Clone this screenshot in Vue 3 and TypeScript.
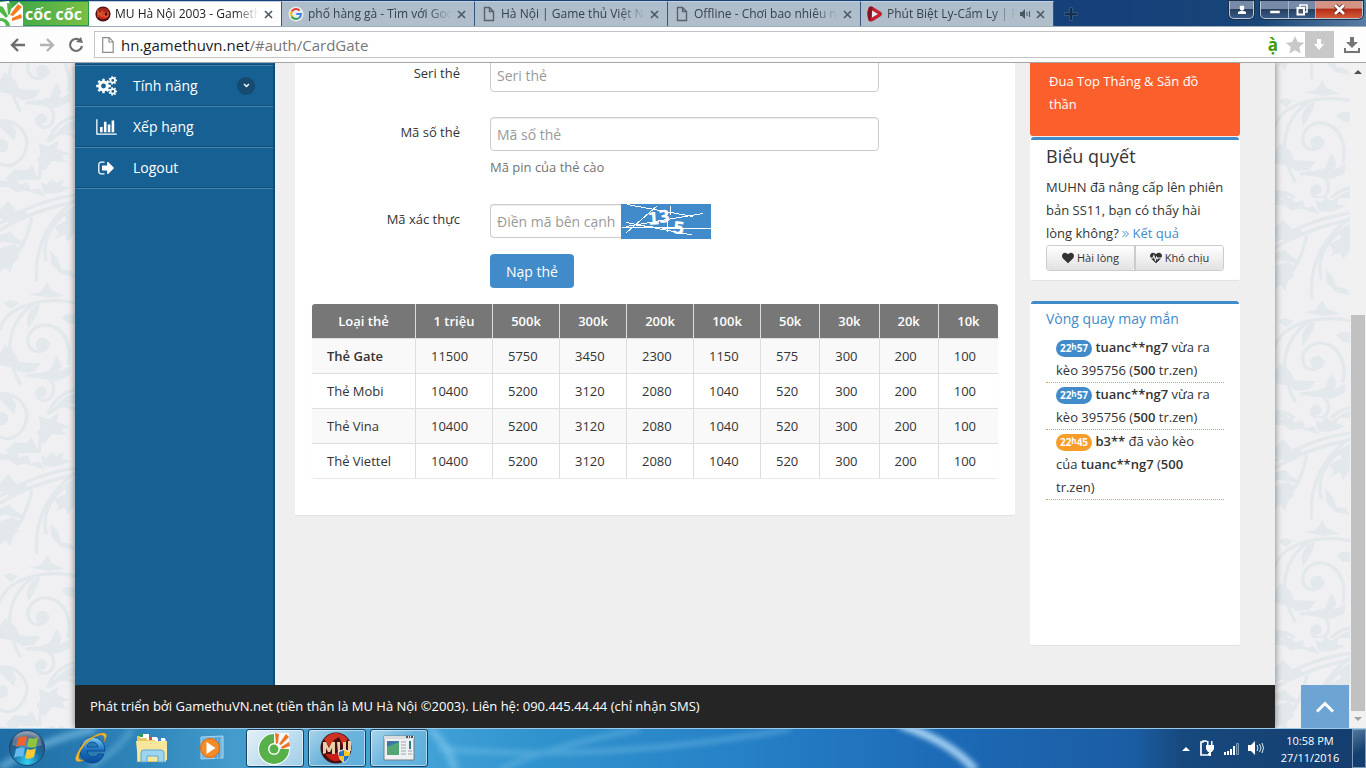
<script setup lang="ts">
interface Tab {
  title: string
  icon: 'mu' | 'google' | 'page' | 'play'
  active?: boolean
  audio?: boolean
}

const tabs: Tab[] = [
  { title: 'MU Hà Nội 2003 - Gameth', icon: 'mu', active: true },
  { title: 'phố hàng gà - Tìm với Goo', icon: 'google' },
  { title: 'Hà Nội | Game thủ Việt Na', icon: 'page' },
  { title: 'Offline - Chơi bao nhiêu nă', icon: 'page' },
  { title: 'Phút Biệt Ly-Cẩm Ly | Ph', icon: 'play', audio: true },
]

const columns = ['Loại thẻ', '1 triệu', '500k', '300k', '200k', '100k', '50k', '30k', '20k', '10k']
const rest = ['10400', '5200', '3120', '2080', '1040', '520', '300', '200', '100']
const rows = [
  { name: 'Thẻ Gate', values: ['11500', '5750', '3450', '2300', '1150', '575', '300', '200', '100'] },
  { name: 'Thẻ Mobi', values: rest },
  { name: 'Thẻ Vina', values: rest },
  { name: 'Thẻ Viettel', values: rest },
]

function gear(cx: number, cy: number, r: number, teeth: number, hole: number): string {
  const inner = r * 0.74
  const step = (Math.PI * 2) / teeth
  const pts: string[] = []
  for (let i = 0; i < teeth; i++) {
    const a = i * step
    const corners: [number, number][] = [[-0.3, inner], [-0.2, r], [0.2, r], [0.3, inner]]
    for (const [o, rad] of corners) {
      pts.push(`${(cx + rad * Math.cos(a + o * step)).toFixed(2)} ${(cy + rad * Math.sin(a + o * step)).toFixed(2)}`)
    }
  }
  return `M${pts.join('L')}ZM${cx - hole} ${cy}a${hole} ${hole} 0 1 0 ${hole * 2} 0a${hole} ${hole} 0 1 0 ${-hole * 2} 0Z`
}
const gears = gear(7.5, 10, 7.4, 8, 2.4) + gear(16.8, 4.4, 4.3, 7, 1.4) + gear(16.8, 15.4, 4.3, 7, 1.4)
</script>

<template>
  <div class="desktop">
    <header class="tabbar">
      <button class="brand" aria-label="Cốc Cốc">
        <svg width="23" height="25" viewBox="0 0 23 25">
          <path d="M0 1l9-1 2 8 8-7 4 4v20H0z" fill="#fff" />
          <path d="M0 5l3 1 5 9-2 2-6-6z" fill="#4fb848" />
          <path d="M7 2l5 1-2 10-2 1z" fill="#4fb848" />
          <path d="M18 3l4 3-9 9-3-1z" fill="#f47b20" />
          <path d="M21 13l1 4-10 3v-3z" fill="#f47b20" />
          <path d="M0 17q9 0 10 8H6q-1-5-6-5z" fill="#4fb848" />
        </svg>
        <span>cốc cốc</span>
      </button>
      <nav class="tabs" aria-label="Tabs">
        <div v-for="t in tabs" :key="t.title" class="tab" :class="{ active: t.active }">
          <svg v-if="t.icon === 'mu'" width="16" height="16" viewBox="0 0 16 16">
            <circle cx="8" cy="8" r="7.6" fill="#4a0f10" />
            <path d="M2 4q6-5 12 0l-1 3H3z" fill="#a3281c" />
            <path d="M3 11q5 5 10 0l-2-2H5z" fill="#c9281e" />
            <path d="M3 11V6l2 3 2-3v5M9 6v4q2 2 4 0V6" fill="none" stroke="#e5562f" stroke-width="1.5" />
          </svg>
          <svg v-else-if="t.icon === 'google'" width="16" height="16" viewBox="0 0 16 16">
            <circle cx="8" cy="8" r="7.5" fill="#e9edf2" />
            <g fill="none" stroke-width="2">
              <path d="M11.6 4.5A5 5 0 0 0 3.7 5.6" stroke="#e34133" />
              <path d="M3.7 5.6A5 5 0 0 0 3.7 10.4" stroke="#f3b605" />
              <path d="M3.7 10.4A5 5 0 0 0 11 12" stroke="#32a350" />
              <path d="M11 12A5 5 0 0 0 13 8H8.3" stroke="#4280ef" />
            </g>
          </svg>
          <svg v-else-if="t.icon === 'page'" width="16" height="16" viewBox="0 0 16 16">
            <path d="M3.5 1.5h5l4 4v9h-9zM8.5 1.5v4h4" fill="none" stroke="#5a6168" stroke-width="1.4" />
          </svg>
          <svg v-else width="16" height="16" viewBox="0 0 16 16">
            <path d="M2 1q2-1 4 0l8 5q2 2 0 4l-8 5q-2 1-4 0-3-7 0-14z" fill="#c4202f" />
            <path d="M2 1q2-1 4 0l-3 14-1 0q-3-7 0-14z" fill="#851622" />
            <path d="M5 4.5l6 3.5-6 3.5z" fill="#e9edf2" />
          </svg>
          <span class="tab-title">{{ t.title }}</span>
          <svg v-if="t.audio" class="audio" width="11" height="10" viewBox="0 0 11 10">
            <path d="M0 3h2l3-3v10L2 7H0z" fill="#4c565f" />
            <path d="M7 3v4M9.500 2v6" stroke="#4c565f" fill="none" />
          </svg>
          <button class="close" aria-label="Close tab">
            <svg width="9" height="9" viewBox="0 0 9 9"><path d="M1 1l7 7M8 1L1 8" stroke="currentColor" stroke-width="1.700" /></svg>
          </button>
        </div>
      </nav>
      <button class="newtab" aria-label="New tab">
        <svg width="14" height="14" viewBox="0 0 14 14"><path d="M5.500 0.500h3v5h5v3h-5v5h-3v-5h-5v-3h5z" fill="#152f50" stroke="#35587f" /></svg>
      </button>
      <div class="winctl">
        <button class="user" aria-label="User">
          <svg width="10" height="10" viewBox="0 0 10 10"><circle cx="5" cy="3" r="2.400" fill="#fff" /><path d="M1 9V7q4-3 8 0v2z" fill="#fff" /></svg>
        </button>
        <div class="group">
          <button class="min" aria-label="Minimize">
            <svg width="12" height="12" viewBox="0 0 12 12"><path d="M1 6.500h10v3H1z" fill="#fff" stroke="#4b5a6c" stroke-width=".6" /></svg>
          </button>
          <button class="max" aria-label="Restore">
            <svg width="12" height="12" viewBox="0 0 12 12"><path d="M4 3V1h7v7H9" fill="none" stroke="#fff" stroke-width="1.600" /><path d="M1.500 4h6.500v6.500H1.500z" fill="#455872" stroke="#fff" stroke-width="2" /></svg>
          </button>
          <button class="exit" aria-label="Close">
            <svg width="13" height="11" viewBox="0 0 13 11"><path d="M2 1l9 9M11 1L2 10" stroke="#5a1710" stroke-width="4.200" /><path d="M2 1l9 9M11 1L2 10" stroke="#fff" stroke-width="2.800" /></svg>
          </button>
        </div>
      </div>
    </header>

    <div class="toolbar">
      <button class="tool" aria-label="Back">
        <svg width="16" height="14" viewBox="0 0 16 14"><path d="M15 7H2M8 1L2 7l6 6" fill="none" stroke="#6e6e6e" stroke-width="2.400" /></svg>
      </button>
      <button class="tool" aria-label="Forward">
        <svg width="16" height="14" viewBox="0 0 16 14"><path d="M1 7h13M8 1l6 6-6 6" fill="none" stroke="#b4b4b4" stroke-width="2.400" /></svg>
      </button>
      <button class="tool" aria-label="Reload">
        <svg width="16" height="16" viewBox="0 0 16 16"><path d="M12 3.400A6 6 0 1 0 14 9" fill="none" stroke="#6e6e6e" stroke-width="2.200" /><path d="M8 5l7 1-2-6z" fill="#6e6e6e" /></svg>
      </button>
      <div class="address">
        <svg width="12" height="16" viewBox="0 0 12 16"><path d="M.7.700h6.500l4 4v10.600H.7zM7 .7V5h4" fill="#fff" stroke="#8d8d8d" stroke-width="1.200" /></svg>
        <span class="url"><b>hn.gamethuvn.net</b>/#auth/CardGate</span>
        <span class="accent">ạ̀</span>
        <svg width="20" height="20" viewBox="0 0 20 20"><path d="M10 1l2.700 6 6.500.7-4.900 4.300 1.400 6.500L10 15.200l-5.700 3.300L5.700 12 .8 7.700 7.300 7z" fill="#c8c8c8" /></svg>
        <button class="save" aria-label="Save">
          <svg width="10" height="13" viewBox="0 0 10 13"><path d="M3 1h4v5h3l-5 6-5-6h3z" fill="#fff" /></svg>
        </button>
      </div>
      <button class="downloads" aria-label="Downloads">
        <svg width="16" height="16" viewBox="0 0 16 16"><path d="M6 0h4v5h4L8 11 2 5h4z" fill="#757575" /><path d="M1 11v4h14v-4" fill="none" stroke="#757575" stroke-width="2" /></svg>
      </button>
    </div>

    <div class="viewport">
      <div class="page">
        <svg class="wallpaper" width="100%" height="100%">
          <defs>
            <g id="flora" fill="none" stroke="#e2e8eb" stroke-width="10" stroke-linecap="round">
              <path d="M225 46Q110 60 0 130M225 66Q100 90 0 150M110 300Q100 150 225 60M138 240Q120 150 210 90M0 265Q70 230 95 115M0 185Q30 160 70 195" />
              <path d="M0 445C25 375 130 350 225 368M100 372C20 430 10 520 60 610M205 550C225 430 110 405 85 470C75 525 135 525 145 492" />
              <path d="M80 588C160 570 175 630 150 655C125 670 105 650 112 632M0 640C60 640 100 690 70 745Q40 790 0 770M145 700Q170 640 225 630M225 690Q190 660 150 700M120 845Q115 780 130 730" />
              <g fill="#e2e8eb" stroke="none">
                <circle cx="127" cy="493" r="20" /><circle cx="125" cy="635" r="16" /><circle cx="5" cy="716" r="20" />
                <path d="M0 0l22 4 25-18 10 28 27-7 8 23 25-5 18 25-32-10-25-8-30 5-20-15L0 20z" />
                <path d="M130 40l-8-35 18 10 12-20 18 14 24-20-8 28 27 6-30 14-23 4z" />
                <path d="M0 90l25-27 25 30 25-5 10 24-30 2-22 16L0 115zM0 165l30-10 20 22 18 20-24-6-44-8zM0 205l40-13 18 12-15 20 16 8-20 18-8 30-15-20-16 15z" />
                <path d="M225 75l-32 28 7 18-36 18 12 22-12 15 30-13 10 22 21-30zM150 210l24 27 10 30 30 5 11 20-42-10-28-28z" />
                <path d="M85 343l37-7 20-30 13 24 38 17-45 7zM10 368l20-8 25 8-22 20zM85 445q-15-35 20-70l15-2q-5 30-35 72zM185 410q20-14 40-5v28q-30 0-40-23z" />
                <path d="M15 495l30 24 14 28 64 3-20 25-35 4-30-16-38-8V520zM150 570l20-45 15 30-8 20 35-18-2 28-40 18-90-13z" />
                <path d="M0 640l30 4 18 30-5 28-15-14-28-30zM150 700q40-55 75-60v30q-40 0-75 30z" />
                <path d="M125 785l-15-30 12-10-6-38 30 12 29-20-4 26 36 15-22 8 14 18-43-4-24 30zM18 812l25-26 38 4 14-18 22 45 3 40-25-24-22 18-8-18-22 10z" />
              </g>
            </g>
            <pattern id="flora-left" width="225" height="819" patternUnits="userSpaceOnUse" patternTransform="translate(0 117) scale(.3333)">
              <use href="#flora" />
            </pattern>
            <pattern id="flora-right" width="225" height="660" patternUnits="userSpaceOnUse" patternTransform="translate(0 -85) scale(.3333)">
              <use href="#flora" />
            </pattern>
          </defs>
          <rect width="50%" height="100%" fill="url(#flora-left)" />
          <rect x="50%" width="50%" height="100%" fill="url(#flora-right)" />
        </svg>
        <div class="site">
          <div class="columns">
            <nav class="sidebar">
              <a href="#features">
                <svg width="21" height="20" viewBox="0 0 21 20"><path :d="gears" fill="#fff" fill-rule="evenodd" /></svg>
                <span>Tính năng</span>
                <i class="expand"><svg width="7" height="5" viewBox="0 0 7 5"><path d="M1 1l2.500 2.500L6 1" fill="none" stroke="#fff" stroke-width="1.400" /></svg></i>
              </a>
              <a href="#rank">
                <svg width="21" height="18" viewBox="0 0 2048 1792"><path d="M640 896v512h-256v-512h256zm384-512v1024h-256v-1024h256zm1024 1152v128h-2048v-1536h128v1408h1920zm-640-896v768h-256v-768h256zm384-384v1152h-256v-1152h256z" fill="#fff" /></svg>
                <span>Xếp hạng</span>
              </a>
              <a href="#logout">
                <svg width="21" height="18" viewBox="0 0 1792 1792"><path d="M704 1440q0 4 1 20t.5 26.500-3 23.500-10 19.500-20.500 6.500h-320q-119 0-203.500-84.500t-84.500-203.500v-704q0-119 84.500-203.500t203.500-84.500h320q13 0 22.500 9.500t9.500 22.500q0 4 1 20t.5 26.500-3 23.500-10 19.500-20.500 6.500h-320q-66 0-113 47t-47 113v704q0 66 47 113t113 47h312l11.500 1 11.500 3 8 5.500 7 9 2 13.500zm928-544q0 26-19 45l-544 544q-19 19-45 19t-45-19-19-45v-288h-448q-26 0-45-19t-19-45v-384q0-26 19-45t45-19h448v-288q0-26 19-45t45-19 45 19l544 544q19 19 19 45z" fill="#fff" /></svg>
                <span>Logout</span>
              </a>
            </nav>

            <main class="card">
              <form @submit.prevent>
                <div class="field">
                  <label for="seri">Seri thẻ</label>
                  <div><input id="seri" type="text" placeholder="Seri thẻ" /></div>
                </div>
                <div class="field">
                  <label for="pin">Mã số thẻ</label>
                  <div>
                    <input id="pin" type="text" placeholder="Mã số thẻ" />
                    <p class="help">Mã pin của thẻ cào</p>
                  </div>
                </div>
                <div class="field">
                  <label for="captcha">Mã xác thực</label>
                  <div>
                    <div class="captcha">
                      <input id="captcha" type="text" placeholder="Điền mã bên cạnh" />
                      <svg width="90" height="35" viewBox="0 0 90 35">
                        <rect width="90" height="35" fill="#428bca" />
                        <g fill="#fff" font-family="DejaVu Sans, sans-serif" font-weight="bold" font-size="17">
                          <text x="27" y="21" transform="rotate(-4 27 21)">1</text>
                          <text x="38" y="19" transform="rotate(-6 38 19)">3</text>
                          <text x="51" y="29" transform="rotate(8 51 29)">5</text>
                        </g>
                        <path d="M6 .5l66 12M5 22.500l77-13M5 18.500l66 12.500M1 23.500h60M5 29L36 2M15 21l30 3.500h45M49.500 2v9M46.500 13v15" fill="none" stroke="#fff" shape-rendering="crispEdges" />
                      </svg>
                    </div>
                    <button class="submit" type="submit">Nạp thẻ</button>
                  </div>
                </div>
              </form>
              <table>
                <colgroup>
                  <col class="c-name" /><col class="c-big" /><col v-for="n in 4" :key="n" class="c-mid" /><col v-for="n in 4" :key="'s' + n" class="c-small" />
                </colgroup>
                <thead>
                  <tr><th v-for="c in columns" :key="c" scope="col">{{ c }}</th></tr>
                </thead>
                <tbody>
                  <tr v-for="(r, i) in rows" :key="r.name">
                    <td><strong v-if="i === 0">{{ r.name }}</strong><template v-else>{{ r.name }}</template></td>
                    <td v-for="(v, j) in r.values" :key="j">{{ v }}</td>
                  </tr>
                </tbody>
              </table>
            </main>

            <aside class="side">
              <a class="promo" href="#event">Đua Top Tháng &amp; Săn đồ thần</a>
              <section class="panel poll">
                <h2>Biểu quyết</h2>
                <p>MUHN đã nâng cấp lên phiên bản SS11, bạn có thấy hài lòng không? <a href="#result"><svg width="7" height="8" viewBox="0 0 7 8"><path d="M.5 1l3 3-3 3M3.500 1l3 3-3 3" fill="none" stroke="currentColor" /></svg> Kết quả</a></p>
                <div class="votes">
                  <button>
                    <svg width="12" height="12" viewBox="0 0 1792 1792"><path d="M896 1664q-26 0-44-18l-624-602q-10-8-27.500-26t-55.500-65.500-68-97.500-53.500-121-23.500-138q0-220 127-344t351-124q62 0 126.500 21.500t120 58 95.500 68.500 76 68q36-36 76-68t95.500-68.500 120-58 126.500-21.500q224 0 351 124t127 344q0 221-229 450l-623 600q-18 18-44 18z" fill="#333" /></svg>
                    Hài lòng
                  </button>
                  <button>
                    <svg width="12" height="12" viewBox="0 0 1792 1792"><path d="M896 1664q-26 0-44-18l-624-602q-228-227-228-448 0-220 127-344t351-124q180 0 318 148l100 68q200-216 418-216 224 0 351 124t127 344q0 221-229 450l-623 600q-18 18-44 18z" fill="#333" /><path d="M0 900h430l150-380 220 750 180-500 110 240 80-110h622" fill="none" stroke="#f4f4f4" stroke-width="150" /></svg>
                    Khó chịu
                  </button>
                </div>
              </section>
              <section class="panel lucky">
                <h3><a href="#wheel">Vòng quay may mắn</a></h3>
                <ul>
                  <li><span class="badge">22<sup>h</sup>57</span> <strong>tuanc**ng7</strong> vừa ra kèo 395756 (<strong>500</strong> tr.zen)</li>
                  <li><span class="badge">22<sup>h</sup>57</span> <strong>tuanc**ng7</strong> vừa ra kèo 395756 (<strong>500</strong> tr.zen)</li>
                  <li><span class="badge warm">22<sup>h</sup>45</span> <strong>b3**</strong> đã vào kèo của <strong>tuanc**ng7</strong> (<strong>500</strong> tr.zen)</li>
                </ul>
              </section>
            </aside>
          </div>
          <footer>Phát triển bởi GamethuVN.net (tiền thân là MU Hà Nội ©2003). Liên hệ: 090.445.44.44 (chỉ nhận SMS)</footer>
        </div>
        <button class="totop" aria-label="Back to top">
          <svg width="20" height="12" viewBox="0 0 20 12"><path d="M2 10.500L10 2.500l8 8" fill="none" stroke="#fff" stroke-width="3" /></svg>
        </button>
      </div>
      <div class="scrollbar">
        <svg width="8" height="5" viewBox="0 0 8 5"><path d="M0 5l4-4 4 4z" fill="#505050" /></svg>
        <div class="track"><div class="before"></div><div class="thumb"></div></div>
        <svg width="8" height="5" viewBox="0 0 8 5"><path d="M0 0l4 4 4-4z" fill="#a3a3a3" /></svg>
      </div>
    </div>

    <div class="taskbar">
      <svg class="aero" viewBox="0 0 1366 40" preserveAspectRatio="none">
        <defs>
          <linearGradient id="sky">
            <stop offset="0" stop-color="#1f6da4" /><stop offset=".1" stop-color="#2e83b9" /><stop offset=".17" stop-color="#439ccb" />
            <stop offset=".3" stop-color="#43a4d8" /><stop offset=".4" stop-color="#3092cd" /><stop offset=".55" stop-color="#2680c6" /><stop offset=".7" stop-color="#1c69b5" />
            <stop offset=".83" stop-color="#1b5da3" /><stop offset=".865" stop-color="#17497e" /><stop offset="1" stop-color="#133d6d" />
          </linearGradient>
          <filter id="soft"><feGaussianBlur stdDeviation="3" /></filter>
        </defs>
        <rect width="1366" height="40" fill="url(#sky)" />
        <g fill="none" stroke="#8fd0f2" filter="url(#soft)">
          <path d="M0 40Q40 12 95 0" stroke-width="8" opacity=".5" />
          <path d="M90 40Q120 20 132 0" stroke-width="6" opacity=".35" />
          <path d="M430 0Q450 20 455 42" stroke-width="8" opacity=".5" />
          <path d="M500 42Q540 20 640 0M440 20Q600 35 790 0" stroke-width="6" opacity=".3" />
          <path d="M900-4Q950 12 975 42" stroke="#b4dcfa" stroke-width="8" opacity=".9" />
        </g>
      </svg>
      <button class="start" aria-label="Start">
        <svg width="38" height="38" viewBox="0 0 38 38">
          <defs>
            <radialGradient id="orb" cx=".5" cy=".9" r=".9"><stop offset="0" stop-color="#33d2f5" /><stop offset=".45" stop-color="#1770a8" /><stop offset=".8" stop-color="#314f70" /><stop offset="1" stop-color="#8ba4ba" /></radialGradient>
          </defs>
          <circle cx="19" cy="19" r="17.500" fill="url(#orb)" stroke="#1b466c" />
          <path d="M4 16Q6 3 19 3t15 13q-15 6-30 0z" fill="#fff" opacity=".22" />
          <path d="M10 9q5-3 9-1l-2 9q-5-2-9 1z" fill="#ef6330" />
          <path d="M21 9q5 2 9-1l-2 10q-5 2-9-1z" fill="#8cc63e" />
          <path d="M8 20q5-3 9-1l-2 9q-5-2-9 1z" fill="#65b9ee" />
          <path d="M19 20q5 2 9-1l-2 9q-5 3-9 1z" fill="#fcc938" />
        </svg>
      </button>
      <button class="task" aria-label="Internet Explorer">
        <svg width="34" height="32" viewBox="0 0 34 32">
          <defs><linearGradient id="ie" x2="0" y2="1"><stop offset="0" stop-color="#7fd3fa" /><stop offset=".5" stop-color="#1a6fc0" /><stop offset="1" stop-color="#0c4c9c" /></linearGradient></defs>
          <path d="M31 19H13q1 6 6 6 4 0 5-3h6q-3 9-12 9Q6 30 6 18 7 6 18 5q13 1 13 14zM13 15h11q-1-5-6-5-4 0-5 5z" fill="url(#ie)" stroke="#0c4286" stroke-width=".8" />
          <path d="M30 10Q37-2 24 2 9 8 3 22-2 33 10 28 1 29 7 18 14 6 26 3q6-1 4 7z" fill="#f5bd2d" stroke="#c98a12" stroke-width=".5" />
        </svg>
      </button>
      <button class="task" aria-label="Explorer">
        <svg width="34" height="30" viewBox="0 0 34 30">
          <path d="M2 3h11l2 3h16v23H2z" fill="#e7c765" /><path d="M5 1h9v4H5z" fill="#fff" /><path d="M5 1h3v3H5z" fill="#2b9b46" /><path d="M12 4h10v3H12z" fill="#fff" /><path d="M14 4h3v3h-3z" fill="#d64f38" /><path d="M20 5h10v3H20z" fill="#fff" /><path d="M23 5h3v3h-3z" fill="#3d83d6" />
          <path d="M1 8h31v19l-3 1H3z" fill="#f7e69c" /><path d="M6 29v-9q0-3 3-3h17q3 0 3 3v9h-6v-6H12v6z" fill="#9bd5ef" stroke="#5ca8d0" />
        </svg>
      </button>
      <button class="task" aria-label="Media Player">
        <svg width="30" height="28" viewBox="0 0 30 28">
          <path d="M3 3l22-1v22l-22 1z" fill="#77b7e0" stroke="#a7d6f2" /><path d="M18 3v22M21 3v22" stroke="#3687be" />
          <circle cx="12" cy="14" r="9.500" fill="#f48a28" stroke="#e4670d" /><path d="M8.500 8l9 6-9 6z" fill="#fff" />
        </svg>
      </button>
      <button class="task open current" aria-label="Cốc Cốc">
        <svg width="34" height="34" viewBox="0 0 34 34">
          <circle cx="16" cy="18" r="16" fill="#fff" />
          <path d="M16 3A15 15 0 1 0 31 18H22A6 6 0 1 1 16 12z" fill="#58b04a" /><circle cx="16" cy="18" r="4.500" fill="#58b04a" />
          <path d="M16 11V2h15v16h-9z" fill="#f3f8fb" /><path d="M17 2l4 1-1 9-2 1zM28 3l3 3-8 8-2-1zM31 11l1 4-8 3-1-2z" fill="#f27224" />
        </svg>
      </button>
      <button class="task open" aria-label="MU">
        <svg width="34" height="34" viewBox="0 0 34 34">
          <circle cx="16" cy="17" r="15.500" fill="#451012" /><path d="M4 8q12-12 24 0l-5 7-4-9-5 3-4 8z" fill="#cf3423" /><path d="M5 23q10 14 22 1l-5-5-8 4z" fill="#c91e17" />
          <path d="M3 11h3l3 6 3-6h3v12h-3v-6l-2 4H8l-2-4v5l-3 1zM17 11h3v9h3v-9h3v11h-8zM28 10h3v10h-3z" fill="#e9cfa8" />
          <path d="M18 20l6-2 6 2q0 9-6 12-6-3-6-12z" fill="#eee" /><path d="M19 21l5-2v6h-5zM24 25h5q-1 4-5 6z" fill="#2575cf" /><path d="M24 19l5 2v4h-5zM19 25h5v6q-4-2-5-6z" fill="#f6c824" />
        </svg>
      </button>
      <button class="task open" aria-label="Window">
        <svg width="32" height="28" viewBox="0 0 32 28">
          <path d="M1 2h30v24H1z" fill="#eef0f2" stroke="#737e88" /><path d="M1 2h30v3H1z" fill="#d9dde0" /><path d="M23 3h2M26 3h1M28 3h2" stroke="#222" stroke-width="1.500" />
          <path d="M4 7h12v14H4z" fill="#3b78a7" /><path d="M4 21V13l12-5v13z" fill="#53a576" /><path d="M18 8h5M18 11h5M18 14h5M18 17h5M18 20h5M25 17h4M25 20h4" stroke="#9ba4ab" /><path d="M26 7h2v8h-2z" fill="#2f7b86" />
        </svg>
      </button>
      <div class="tray">
        <svg width="8" height="5" viewBox="0 0 8 5"><path d="M0 5l4-4 4 4z" fill="#fff" /></svg>
        <svg width="16" height="16" viewBox="0 0 16 16"><path d="M7 2V1H4v1H2v13h8v-2" fill="none" stroke="#fff" stroke-width="1.700" /><path d="M7 5h8v4l-2 3h-4L7 9zM8 1h1.500v4H8zM12 1h1.500v4H12zM10 12h2v4h-2z" fill="#fff" /></svg>
        <svg width="15" height="13" viewBox="0 0 15 13"><path d="M0 10h2v3H0zM3 9h2v4H3zM6 7h2v6H6zM9 4h2v9H9z" fill="#fff" /><path d="M12.500 1.500h2v11h-2z" fill="#3c6387" stroke="#789ab8" /></svg>
        <svg width="16" height="14" viewBox="0 0 16 14"><path d="M0 4h3l4-4v14l-4-4H0z" fill="#fff" /><path d="M9 4q2 3 0 6M11.500 3q3 4 0 8M14 2q3 5 0 10" fill="none" stroke="#dce7f0" /></svg>
      </div>
      <div class="clock"><span>10:58 PM</span><span>27/11/2016</span></div>
      <button class="peek" aria-label="Show desktop"></button>
    </div>
  </div>
</template>

<style>
html, body { margin: 0; overflow: hidden; }
</style>

<style scoped>
* { box-sizing: border-box; }
button { border: 0; padding: 0; margin: 0; background: none; font: inherit; color: inherit; display: flex; align-items: center; justify-content: center; }
svg { flex: none; }
a { color: #428bca; text-decoration: none; }
strong { font-weight: 600; }
.desktop { display: flex; flex-direction: column; height: 100vh; font-family: "Open Sans", "Noto Sans", sans-serif; font-size: 13px; color: #333; overflow: hidden; }

.tabbar { display: flex; height: 27px; padding-top: 1px; background: linear-gradient(90deg, #16407a 0, #16407a 82%, #174577 92%, #587da3 100%); border-bottom: 1px solid #9eadba; }
.brand { width: 89px; justify-content: flex-start; background: linear-gradient(90deg, #36a14a, #7ac043); color: #fff; font-weight: 700; font-size: 16px; line-height: 20px; gap: 2px; border: 1px solid #239b48; border-left: 0; white-space: nowrap; }
.tabs { display: flex; flex: 0 1 965px; min-width: 0; }
.tab { flex: 1; min-width: 0; display: flex; align-items: center; gap: 4px; padding: 0 7px 0 6px; background: linear-gradient(#aebdcc, #b0bfca); border-right: 1px solid #34567f; border-top: 1px solid #c4d0db; color: #38424c; font-size: 12px; }
.tab.active { background: #fff; color: #222; }
.tab-title { flex: 1; min-width: 0; overflow: hidden; white-space: nowrap; line-height: 20px; mask-image: linear-gradient(90deg, #000 calc(100% - 24px), transparent); }
.close { width: 11px; height: 16px; color: #505b66; }
.newtab { width: 34px; }
.winctl { margin-left: auto; display: flex; gap: 6px; padding-right: 3px; height: 18px; }
.user, .group { border: 1px solid #b9c8d8; border-top: 0; border-radius: 0 0 5px 5px; box-shadow: 0 0 0 1px #1b2f49; overflow: hidden; background: linear-gradient(#768ba7 45%, #283f5f 50%, #355a86); }
.user { width: 25px; }
.group { display: flex; width: 103px; }
.min { width: 28px; border-right: 1px solid #a5b6c8; }
.max { width: 27px; border-right: 1px solid #a5b6c8; }
.exit { flex: 1; background: linear-gradient(#d59384 40%, #b62d18 50%, #d45a38); }

.toolbar { display: flex; align-items: center; height: 36px; padding: 0 6px 0 10px; background: #fdfdfd; border-bottom: 1px solid #a5a5a5; }
.tool { width: 16px; margin-right: 13px; }
.tool:nth-child(3) { margin-right: 10px; }
.address { flex: 1; height: 27px; display: flex; align-items: center; border: 1px solid #c4c4c4; background: #fff; padding-left: 7px; }
.url { flex: 1; padding-left: 7px; font-size: 15px; line-height: 24px; color: #777; }
.url b { font-weight: 400; color: #1b1b1b; }
.accent { color: #3e9c0a; font-weight: 700; font-size: 17px; line-height: 24px; margin-right: 7px; }
.save { width: 28px; height: 27px; background: #c8c8c8; }
.downloads { width: 16px; margin-left: 10px; }

.viewport { flex: 1; min-height: 0; display: flex; overflow: hidden; }
.page { flex: 1; min-width: 0; position: relative; background: #f0f0f2; display: flex; justify-content: center; overflow: hidden; }
.wallpaper { position: absolute; inset: 0; }
.site { position: relative; width: 1200px; max-width: 100%; display: flex; flex-direction: column; background: #efefef; box-shadow: 0 0 7px rgba(0, 0, 0, .5); }
.columns { flex: 1; min-height: 0; display: flex; align-items: flex-start; padding-right: 35px; }
.sidebar { align-self: stretch; width: 200px; flex: none; background: #176093; border-right: 2px solid #114a73; padding-top: 1px; }
.sidebar::before { content: ""; display: block; height: 1px; background: #124f7a; }
.sidebar a { display: flex; align-items: center; height: 41px; padding: 0 18px 0 21px; border-top: 1px solid #4482ae; border-bottom: 1px solid #124f7a; color: #fff; font-size: 14px; line-height: 20px; }
.sidebar::after { content: ""; display: block; height: 1px; background: #4482ae; }
.sidebar span { flex: 1; padding-left: 16px; }
.expand { width: 18px; height: 18px; border-radius: 9px; background: #164a71; display: flex; align-items: center; justify-content: center; }
.card { flex: 1; min-width: 0; margin-left: 20px; padding: 0 17px 37px; background: #fff; border-bottom: 1px solid #e2e2e2; border-radius: 0 0 3px 3px; }
form { margin-top: -5px; display: flex; flex-direction: column; gap: 25px; }
.field { display: grid; grid-template-columns: 148px minmax(0, 389px); gap: 30px; }
label { text-align: right; line-height: 30px; }
input { display: block; width: 100%; height: 34px; padding: 0 6px; border: 1px solid #ccc; border-radius: 4px; background: #fff; font: 14px/20px "Open Sans", "Noto Sans", sans-serif; color: #333; box-shadow: inset 0 1px 1px rgba(0, 0, 0, .075); outline: 0; }
input::placeholder { color: #999; opacity: 1; }
.help { margin: 5px 0 0; line-height: 23px; color: #737373; }
.captcha { display: flex; }
.captcha input { width: 131px; border-radius: 4px 0 0 4px; border-right: 0; }
.submit { width: 84px; height: 34px; margin-top: 15px; background: #428bca; color: #fff; border-radius: 4px; font-size: 14px; }
table { width: 100%; margin-top: 16px; table-layout: fixed; border-collapse: separate; border-spacing: 0; border-radius: 3px; overflow: hidden; box-shadow: 0 1px 1px #e8e8e8; }
.c-name { width: 104px; }
.c-big { width: 77px; }
.c-mid { width: 67px; }
th { height: 34px; padding: 0; background: #777; color: #fff; font-weight: 600; border-right: 1px solid #ddd; }
td { height: 35px; padding: 0 0 0 15px; border-top: 1px solid #ddd; border-right: 1px solid #ddd; background: #fff; white-space: nowrap; }
th:last-child, td:last-child { border-right: 0; }
tbody tr:nth-child(odd) td { background: #f9f9f9; }

.side { width: 210px; flex: none; margin-left: 15px; line-height: 23px; }
.promo { display: block; padding: 7px 19px 20px; background: #fa5f2c; color: #fff; border-radius: 0 0 3px 3px; }
.panel { background: #fff; border-radius: 3px; border: 1px solid #fff; border-top: 0; border-bottom: 1px solid #e2e2e2; padding: 0 15px; }
.panel::before { content: ""; display: block; height: 3px; margin: 0 -15px; background: #428bca; border-radius: 3px 3px 0 0; }
.poll { margin-top: 1px; padding-bottom: 9px; }
h2 { margin: 3px 0 6px; font-size: 18px; line-height: 27px; font-weight: 400; }
p { margin: 0; }
.votes { display: flex; border: 1px solid #ccc; border-radius: 3px; }
.votes button { flex: 1; height: 24px; gap: 3px; font-size: 11px; line-height: 20px; background: linear-gradient(#fff, #e2e2e2); border-radius: 3px; }
.votes button + button { border-left: 2px solid #ccc; border-radius: 0 3px 3px 0; }
.lucky { margin-top: 20px; height: 345px; }
h3 { margin: 3px 0 6px; font-size: 14px; line-height: 23px; font-weight: 400; }
ul { list-style: none; margin: 0; padding: 0; }
li { padding: 0 10px; border-bottom: 1px dotted #f89d28; }
.badge { display: inline-flex; justify-content: center; align-items: baseline; width: 36px; height: 17px; border-radius: 9px; background: #428bca; color: #fff; font-size: 10px; line-height: 17px; font-weight: 700; }
.badge.warm { background: #f89d28; }
sup { align-self: flex-start; font-size: 8px; line-height: 14px; }
footer { height: 43px; flex: none; padding: 0 15px; background: #252525; color: #fff; line-height: 43px; }
.totop { position: absolute; right: 1px; bottom: 0; width: 48px; height: 43px; background: #6ea4d4; }
.scrollbar { width: 16px; display: flex; flex-direction: column; align-items: center; justify-content: space-between; padding: 6px 0; background: #f1f1f1; }
.track { flex: 1; margin: 4px 0 6px; width: 14px; display: flex; flex-direction: column; }
.before { flex: 237; }
.thumb { flex: 396; background: #c1c1c1; }

.taskbar { position: relative; height: 40px; flex: none; display: flex; align-items: center; background: #2680c6; box-shadow: inset 0 1px #9cc9e8; color: #fff; font-size: 11px; }
.taskbar > :not(.aero) { position: relative; }
.aero { position: absolute; inset: 1px 0 0; width: 100%; height: 39px; }
.start { width: 54px; height: 40px; margin-right: 6px; }
.task { width: 61px; height: 40px; }
.task.open { width: 58px; height: 38px; margin-right: 4px; border: 1px solid #173f60; border-radius: 3px; background: linear-gradient(135deg, rgba(255, 255, 255, .55), rgba(255, 255, 255, .2) 50%, rgba(255, 255, 255, .15)); box-shadow: inset 0 0 0 1px rgba(255, 255, 255, .5); }
.task.current { margin-left: 3px; background: linear-gradient(135deg, rgba(255, 255, 255, .85), rgba(255, 255, 255, .5)); }
.tray { margin-left: auto; display: flex; align-items: center; gap: 9px; }
.clock { display: flex; flex-direction: column; align-items: center; width: 84px; margin-left: 4px; line-height: 17px; padding-top: 1px; }
.peek { width: 14px; height: 39px; border: 1px solid #7f9ab5; background: linear-gradient(150deg, #50779e, #143e6d 60%); }
</style>
